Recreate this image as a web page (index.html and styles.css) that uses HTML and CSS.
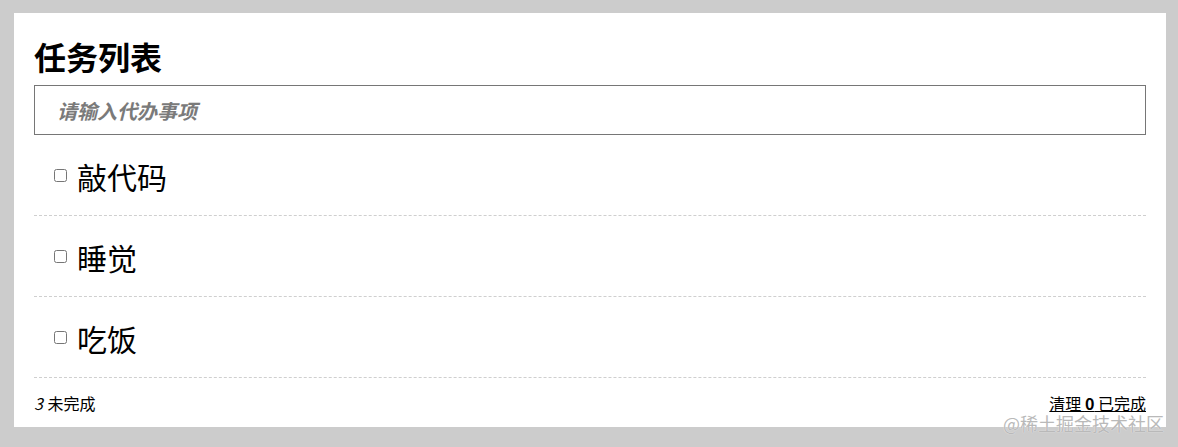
FILE: index.html
```html
<!DOCTYPE html>
<html lang="zh-CN">
<head>
<meta charset="utf-8">
<title>任务列表</title>
<link rel="stylesheet" href="styles.css">
</head>
<body>
<section class="todo">
  <h1 class="title">任务列表</h1>
  <input class="new-todo" type="text" placeholder="请输入代办事项">
  <ul class="list">
    <li class="item"><input class="toggle" type="checkbox"><span class="label">敲代码</span></li>
    <li class="item"><input class="toggle" type="checkbox"><span class="label">睡觉</span></li>
    <li class="item"><input class="toggle" type="checkbox"><span class="label">吃饭</span></li>
  </ul>
  <footer class="footer">
    <span class="count"><em class="num">3</em> 未完成</span>
    <a class="clear">清理 <strong>0</strong> 已完成</a>
  </footer>
</section>
<div class="watermark">@稀土掘金技术社区</div>
</body>
</html>
```
FILE: styles.css
```css
html, body {
  margin: 0;
  padding: 0;
}
body {
  background: #cccccc;
  padding: 13px 12px 20px 14px;
  font-family: "Noto Sans CJK SC", "Noto Sans", sans-serif;
  color: #000;
  position: relative;
}
.todo {
  background: #fff;
  padding: 23px 20px 0 20px;
}
.title {
  margin: 0 0 9px 0;
  font-size: 32px;
  line-height: 40px;
  font-weight: 700;
}
.new-todo {
  display: block;
  width: 100%;
  box-sizing: border-box;
  height: 50px;
  margin: 0;
  border: 1px solid #767676;
  padding: 0 0 0 22px;
  font-family: "Noto Sans CJK SC", sans-serif;
  font-size: 20px;
  font-style: italic;
  font-weight: 700;
  outline: none;
}
.new-todo::placeholder {
  color: #7a7a7a;
  font-style: italic;
  font-weight: 700;
}
.list {
  list-style: none;
  margin: 0;
  padding: 0;
}
.item {
  display: flex;
  align-items: center;
  height: 80px;
  border-bottom: 1px dashed #cfcfcf;
}
.toggle {
  width: 13px;
  height: 13px;
  margin: 0 10px 0 20px;
}
.label {
  font-size: 30px;
  line-height: 40px;
  margin-top: 1px;
}
.footer {
  display: flex;
  justify-content: space-between;
  align-items: center;
  padding: 16px 0 15px 0;
  font-size: 16px;
  line-height: 18px;
}
.num {
  font-style: italic;
  margin-right: 1px;
}
.clear {
  text-decoration: underline;
  color: #000;
}
.clear strong {
  font-weight: 700;
}
.watermark {
  position: absolute;
  left: 1003px;
  top: 415px;
  font-size: 18px;
  line-height: 17px;
  color: #b9b9b9;
  text-shadow: 0 0 1px #fff;
  white-space: nowrap;
}
```
